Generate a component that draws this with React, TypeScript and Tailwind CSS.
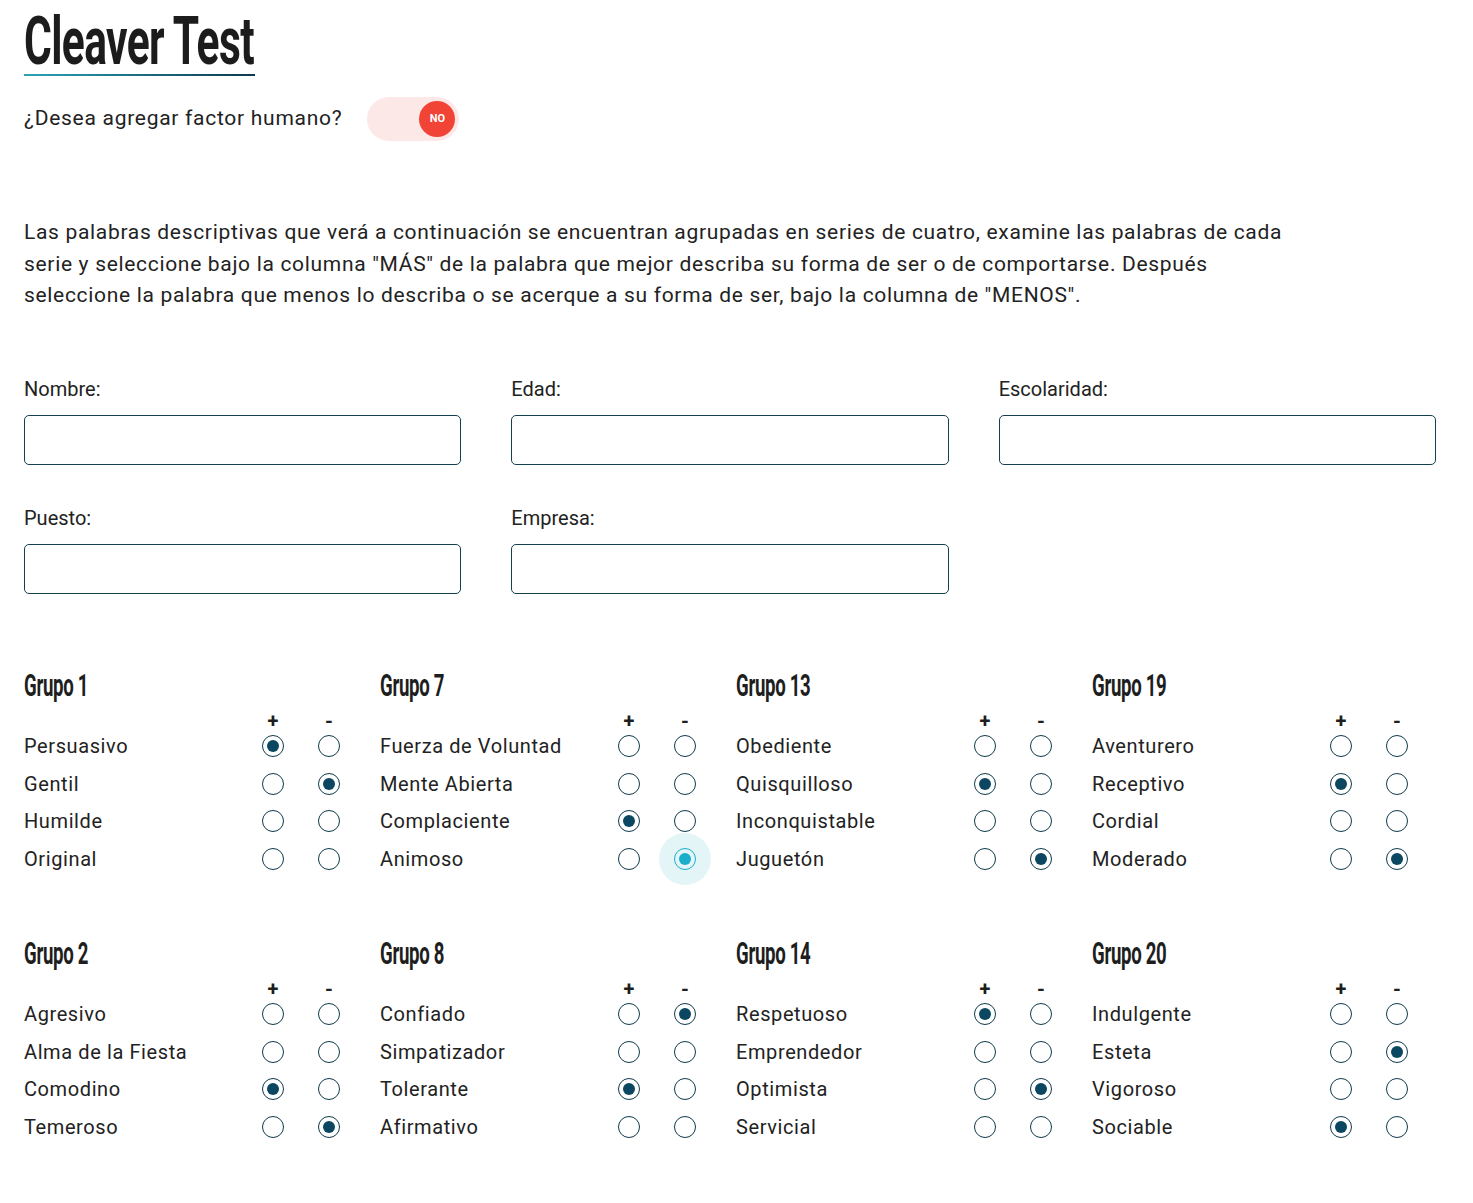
import React from "react";

type Sel = "+" | "-" | null;
type Row = { word: string; sel: Sel; focus?: boolean };
type Group = { n: number; rows: Row[] };

const top: Group[] = [
  { n: 1, rows: [ { word: "Persuasivo", sel: "+" }, { word: "Gentil", sel: "-" }, { word: "Humilde", sel: null }, { word: "Original", sel: null } ] },
  { n: 7, rows: [ { word: "Fuerza de Voluntad", sel: null }, { word: "Mente Abierta", sel: null }, { word: "Complaciente", sel: "+" }, { word: "Animoso", sel: "-", focus: true } ] },
  { n: 13, rows: [ { word: "Obediente", sel: null }, { word: "Quisquilloso", sel: "+" }, { word: "Inconquistable", sel: null }, { word: "Juguetón", sel: "-" } ] },
  { n: 19, rows: [ { word: "Aventurero", sel: null }, { word: "Receptivo", sel: "+" }, { word: "Cordial", sel: null }, { word: "Moderado", sel: "-" } ] },
];
const bottom: Group[] = [
  { n: 2, rows: [ { word: "Agresivo", sel: null }, { word: "Alma de la Fiesta", sel: null }, { word: "Comodino", sel: "+" }, { word: "Temeroso", sel: "-" } ] },
  { n: 8, rows: [ { word: "Confiado", sel: "-" }, { word: "Simpatizador", sel: null }, { word: "Tolerante", sel: "+" }, { word: "Afirmativo", sel: null } ] },
  { n: 14, rows: [ { word: "Respetuoso", sel: "+" }, { word: "Emprendedor", sel: null }, { word: "Optimista", sel: "-" }, { word: "Servicial", sel: null } ] },
  { n: 20, rows: [ { word: "Indulgente", sel: null }, { word: "Esteta", sel: "-" }, { word: "Vigoroso", sel: null }, { word: "Sociable", sel: "+" } ] },
];

function Radio({ checked, focus }: { checked: boolean; focus?: boolean }) {
  return (
    <div className="relative w-[22px] h-[22px] flex items-center justify-center">
      {focus && (
        <div className="absolute left-1/2 top-1/2 -translate-x-1/2 -translate-y-1/2 w-[52px] h-[52px] rounded-full bg-[#e4f5f8]" />
      )}
      <div
        className={
          focus
            ? "relative w-[22px] h-[22px] rounded-full border-[1.5px] border-[#1aaecb] flex items-center justify-center"
            : "relative w-[22px] h-[22px] rounded-full border-[1.5px] border-[#0f3b4b] flex items-center justify-center"
        }
      >
        {checked && (
          <div className={focus ? "w-[12px] h-[12px] rounded-full bg-[#1aaecb]" : "w-[12px] h-[12px] rounded-full bg-[#0b4760]"} />
        )}
      </div>
    </div>
  );
}

function GroupBlock({ g }: { g: Group }) {
  return (
    <div className="w-[356px]">
      <div className="h-[32px] leading-[32px] whitespace-nowrap">
        <span className="inline-block origin-left scale-x-[0.6] text-[31px] font-bold text-[#1e1e1e] tracking-[-0.5px]">
          Grupo {g.n}
        </span>
      </div>
      <div className="flex h-[18px] mt-[8px] text-[20px] font-bold leading-[22px] text-[#1e1e1e]">
        <div className="w-[238px]" />
        <div className="w-[22px] text-center">+</div>
        <div className="w-[34px]" />
        <div className="w-[22px] text-center">-</div>
      </div>
      {g.rows.map((r) => (
        <div key={r.word} className="flex items-center h-[37.5px]">
          <div className="w-[238px] text-[20px] tracking-[0.6px] text-[#222]">{r.word}</div>
          <Radio checked={r.sel === "+"} />
          <div className="w-[34px]" />
          <Radio checked={r.sel === "-"} focus={r.focus} />
        </div>
      ))}
    </div>
  );
}

function Field({ label }: { label: string }) {
  return (
    <div className="flex flex-col">
      <div className="h-[24px] leading-[24px] text-[20px] text-[#222]">{label}</div>
      <div className="mt-[14px] h-[50px] rounded-[5px] border border-[#12404f] bg-white" />
    </div>
  );
}

export default function App() {
  return (
    <div className="min-h-[1203px] bg-white px-[24px] pt-[12px] pb-[40px] text-[#222]" style={{ fontFamily: "Roboto, 'Noto Sans', sans-serif" }}>
      <div className="w-[231px]">
        <h1 className="h-[60px] leading-[60px] whitespace-nowrap">
          <span className="inline-block origin-left scale-x-[0.645] text-[66px] font-bold text-[#1c1c1c] tracking-[-1px]">
            Cleaver Test
          </span>
        </h1>
        <div className="mt-[2px] h-[2px] w-[231px] bg-gradient-to-r from-[#2ca4b8] to-[#0d3a4d]" />
      </div>

      <div className="mt-[21px] flex items-center">
        <div className="text-[21px] tracking-[0.72px] text-[#222]">¿Desea agregar factor humano?</div>
        <div className="ml-[25px] w-[92px] h-[44px] rounded-full bg-[#fde8e8] flex items-center justify-end pr-[4px]">
          <div className="w-[36px] h-[36px] rounded-full bg-[#f14336] flex items-center justify-center text-white text-[11px] font-bold">
            NO
          </div>
        </div>
      </div>

      <p className="mt-[76px] max-w-[1290px] text-[21px] tracking-[0.68px] leading-[31.5px] text-[#222]">
        Las palabras descriptivas que verá a continuación se encuentran agrupadas en series de cuatro, examine las palabras de cada serie y seleccione bajo la columna "MÁS" de la palabra que mejor describa su forma de ser o de comportarse. Después seleccione la palabra que menos lo describa o se acerque a su forma de ser, bajo la columna de "MENOS".
      </p>

      <div className="mt-[65px] grid grid-cols-3 gap-x-[50px] gap-y-[41px] w-[1412px]">
        <Field label="Nombre:" />
        <Field label="Edad:" />
        <Field label="Escolaridad:" />
        <Field label="Puesto:" />
        <Field label="Empresa:" />
      </div>

      <div className="mt-[76px] flex">
        {top.map((g) => (
          <GroupBlock key={g.n} g={g} />
        ))}
      </div>
      <div className="mt-[60px] flex">
        {bottom.map((g) => (
          <GroupBlock key={g.n} g={g} />
        ))}
      </div>
    </div>
  );
}
